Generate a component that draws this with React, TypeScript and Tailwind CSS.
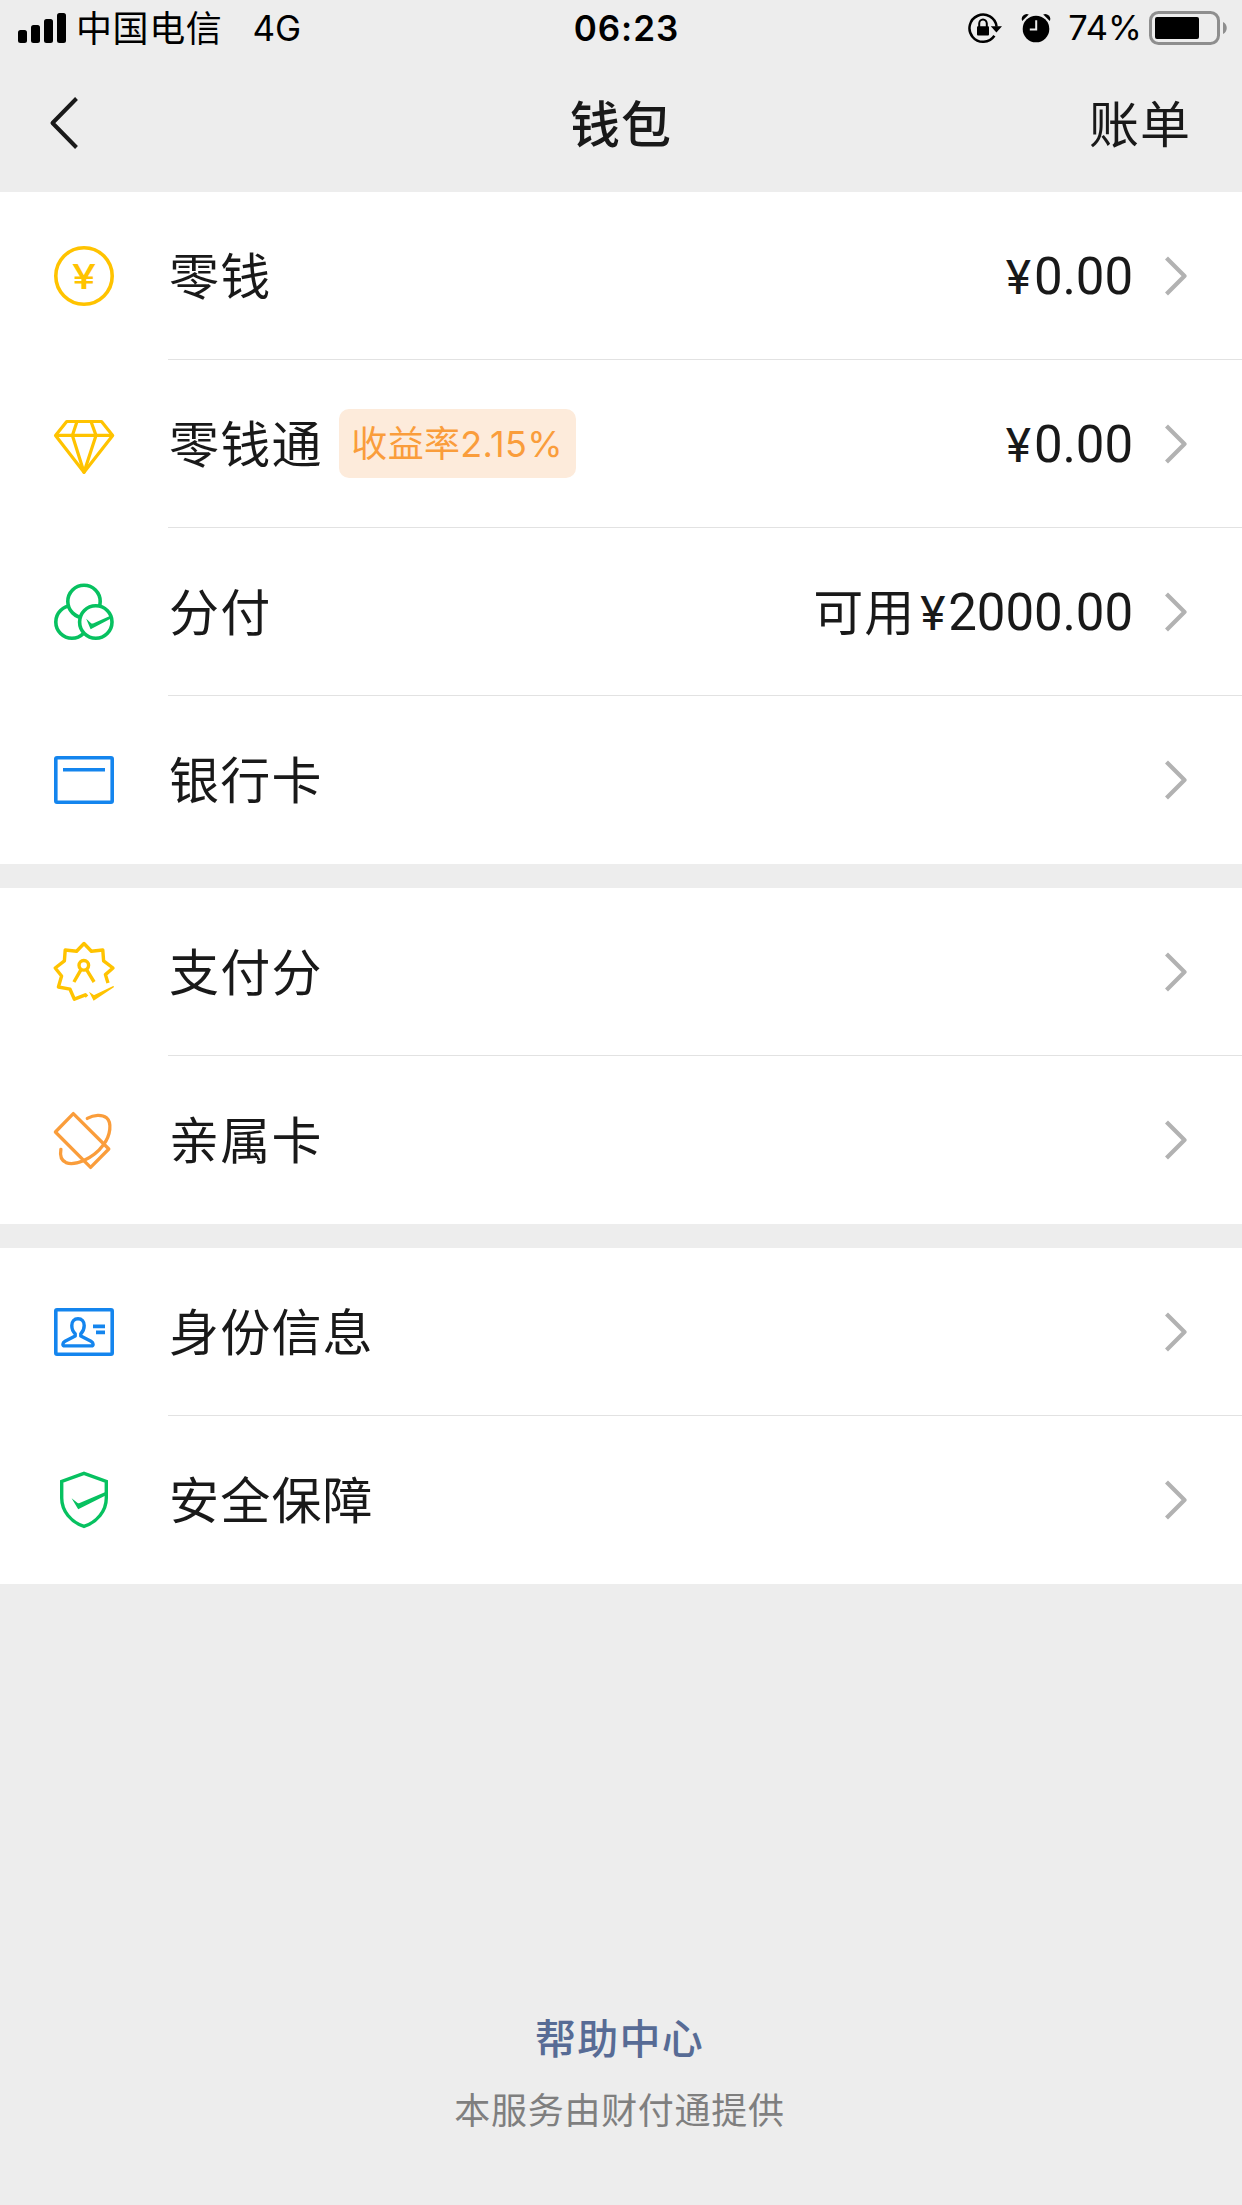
import React from 'react';
import type { ReactNode } from 'react';

interface WalletItem {
  label: string;
  icon: ReactNode;
  badge?: string;
  prefix?: string;
  amount?: string;
}

const YELLOW = '#ffc300';
const GREEN = '#07c160';
const BLUE = '#1485ee';
const ORANGE = '#fa9d3b';

function Icon({ color, children }: { color: string; children: ReactNode }) {
  return (
    <svg
      className="size-[72px] shrink-0"
      viewBox="0 0 72 72"
      fill="none"
      stroke={color}
      strokeWidth="3.6"
      strokeLinejoin="round"
    >
      {children}
    </svg>
  );
}

const coinIcon = (
  <Icon color={YELLOW}>
    <circle cx="36" cy="36" r="28.2" />
    <text
      x="36"
      y="49.2"
      textAnchor="middle"
      textLength="24"
      lengthAdjust="spacingAndGlyphs"
      fill={YELLOW}
      stroke="none"
      className="font-['Inter',sans-serif] text-[34.5px] font-medium"
    >
      ¥
    </text>
  </Icon>
);

const diamondIcon = (
  <Icon color={YELLOW}>
    <g strokeWidth="3.2">
      <path d="M18.7 13.5H53.5L64.7 27.4L36 64.3L7.5 27.4Z" />
      <path d="M7.5 27.4H64.7" />
      <path d="M29 13.5L24.4 27.4L36 64.3L48 27.4L43 13.5" />
    </g>
  </Icon>
);

const circlesIcon = (
  <Icon color={GREEN}>
    <circle cx="24" cy="46" r="16.2" />
    <circle cx="36" cy="25.4" r="16.2" fill="#fff" />
    <circle cx="47.8" cy="46" r="16.2" fill="#fff" />
    <path d="M38.2 42.8L43.4 47.4Q44 47.8 45 47.4L63 39.4V42.4L42.6 53.3Z" fill={GREEN} stroke="none" />
  </Icon>
);

const bankCardIcon = (
  <Icon color={BLUE}>
    <rect x="7.8" y="13.8" width="56.4" height="44.4" rx="1.2" />
    <path d="M15 25.8H57" />
  </Icon>
);

const scoreIcon = (
  <Icon color={YELLOW}>
    <g strokeWidth="3.4">
      <path d="M60 46.9L57.4 38.6L65 32L55.6 24.8L54.8 14L43.4 15.2L36 7.5L28.6 15.2L17.2 14L16.4 24.8L7.2 32L13.6 40L10.4 51L22 53.2L26.4 63.2L37.4 58.8L39 60.6" />
      <circle cx="35.8" cy="29.3" r="4.8" />
      <path d="M32.6 34.4L25.9 46M39 34.4L46.1 46" />
    </g>
    <path d="M41 55.7L45.4 58.8Q46 59.2 46.8 58.8L65.2 49.9Q66.4 50 65.8 51.2L45.6 64.7Z" fill={YELLOW} stroke="none" />
  </Icon>
);

const familyCardIcon = (
  <Icon color={ORANGE}>
    <g strokeWidth="3.3" strokeLinecap="round">
      <path d="M25.3 9.6L7.4 28L42.6 63.4L60.8 45Z" />
      <path d="M39.3 14.4C46 10.5 54 10.2 58.5 13.8C64 18.6 62.8 31 55.3 41C50 48.2 42 53.8 35.3 56.7C29 59.4 22 60.2 18 58.6C13 56.4 12 50.5 12.9 45.3" />
    </g>
  </Icon>
);

const idIcon = (
  <Icon color={BLUE}>
    <rect x="7.8" y="13.8" width="56.4" height="44.4" rx="1.2" />
    <path
      strokeWidth="3.4"
      d="M30 22.8C26.2 22.8 23.8 25.6 23.8 29.6C23.8 33.2 25.2 36 27.2 37.8V40L17 45.2C15.6 46 14.9 46.8 14.9 48.2C14.9 49.4 15.6 49.9 16.8 49.9H43.2C44.4 49.9 45.1 49.4 45.1 48.2C45.1 46.8 44.4 46 43 45.2L32.8 40V37.8C34.8 36 36.2 33.2 36.2 29.6C36.2 25.6 33.8 22.8 30 22.8Z"
    />
    <path d="M45 30.4H57M48 36.4H57" />
  </Icon>
);

const shieldIcon = (
  <Icon color={GREEN}>
    <path
      strokeWidth="3.4"
      d="M36 9.4L58.3 17.4V34C58.3 47 49 58.2 36 62.4C23 58.2 13.7 47 13.7 34V17.4Z"
      strokeLinejoin="miter"
    />
    <path d="M23.6 34.2L29.6 39Q30.4 39.6 31.6 39.1L58.6 27.6V30.9L30.2 45.2Z" fill={GREEN} stroke="none" />
  </Icon>
);

const groups: WalletItem[][] = [
  [
    { label: '零钱', icon: coinIcon, amount: '0.00' },
    { label: '零钱通', icon: diamondIcon, badge: '收益率2.15%', amount: '0.00' },
    { label: '分付', icon: circlesIcon, prefix: '可用', amount: '2000.00' },
    { label: '银行卡', icon: bankCardIcon },
  ],
  [
    { label: '支付分', icon: scoreIcon },
    { label: '亲属卡', icon: familyCardIcon },
  ],
  [
    { label: '身份信息', icon: idIcon },
    { label: '安全保障', icon: shieldIcon },
  ],
];

function StatusBar() {
  return (
    <div className="grid h-14 grid-cols-3 items-center text-black">
      <div className="flex h-14 items-center pl-[18px]">
        <svg className="h-[30px] w-12 shrink-0" viewBox="0 0 48 30">
          <rect x="0" y="17" width="9" height="13" rx="2.5" />
          <rect x="13" y="12" width="9" height="18" rx="2.5" />
          <rect x="26" y="6" width="9" height="24" rx="2.5" />
          <rect x="39" y="0" width="9" height="30" rx="2.5" />
        </svg>
        <span className="ml-[10px] pb-1 text-[36px] leading-none tracking-[0.6px]">中国电信</span>
        <span className="ml-[30px] font-['Inter',sans-serif] text-[35px] leading-none">4G</span>
      </div>
      <div className="pl-[11px] text-center font-['Inter',sans-serif] text-[35px] leading-none font-semibold tracking-[1px]">
        06:23
      </div>
      <div className="flex h-14 items-center justify-end pr-[14px]">
        {/* 方向锁定 */}
        <svg className="h-8 w-9 shrink-0" viewBox="0 0 36 32">
          <path
            d="M27.4 23.8A13.6 13.6 0 1 1 29.6 14.6"
            fill="none"
            stroke="#000"
            strokeWidth="2.5"
          />
          <path d="M23.8 14.2H35L29.4 20.4Z" />
          <rect x="10" y="14.2" width="12" height="9.2" rx="1" />
          <path d="M12.2 15V11.6A3.8 4.2 0 0 1 19.8 11.6V15" fill="none" stroke="#000" strokeWidth="2" />
        </svg>
        {/* 闹钟 */}
        <svg className="ml-[18px] h-8 w-[30px] shrink-0" viewBox="0 0 30 32">
          <circle cx="15" cy="17" r="13.3" />
          <path d="M1.2 9A5 5 0 0 1 7.8 2.4Z" />
          <path d="M28.8 9A5 5 0 0 0 22.2 2.4Z" />
          <path d="M15.2 8.2V17.4H8.8" fill="none" stroke="#ededed" strokeWidth="2" />
        </svg>
        <span className="ml-[17px] font-['Inter',sans-serif] text-[34.5px] leading-none">74%</span>
        <svg className="ml-[7px] h-[34px] w-[79px] shrink-0" viewBox="0 0 79 34">
          <rect x="1.5" y="1.5" width="68" height="31" rx="8" fill="none" stroke="#8e8e8e" strokeWidth="3" />
          <rect x="6" y="6" width="44" height="22" rx="2" />
          <path d="M74 11C79 13 79 21 74 23Z" fill="#8e8e8e" />
        </svg>
      </div>
    </div>
  );
}

function NavBar() {
  return (
    <div className="grid h-[136px] grid-cols-3 items-center pb-[2px] text-[50px] leading-none tracking-[1px]">
      <svg className="ml-12 h-14 w-8" viewBox="0 0 32 56" fill="none" stroke="#191919" strokeWidth="4">
        <path d="M28.5 3.5L4.5 28L28.5 52.5" strokeLinejoin="round" />
      </svg>
      <h1 className="pb-[5px] text-center font-medium">钱包</h1>
      <span className="pr-[51px] pb-[5px] text-right">账单</span>
    </div>
  );
}

function WalletRow({ item, last }: { item: WalletItem; last: boolean }) {
  return (
    <div className="flex h-[168px] pl-12">
      <div className="flex items-center">{item.icon}</div>
      <div
        className={`ml-[48px] flex flex-1 items-center border-b pr-[55px] ${
          last ? 'border-transparent' : 'border-[#e2e2e2]'
        }`}
      >
        <span className="ml-px pb-[5px] text-[50px] leading-none tracking-[1.2px]">{item.label}</span>
        {item.badge && (
          <span className="ml-4 flex h-[69px] w-[237px] items-center justify-center rounded-[10px] bg-[#fdebdb] font-['Inter','Noto_Sans_CJK_SC',sans-serif] text-[36px] leading-none tracking-[0.3px] text-[#fa9d3b]">
            {item.badge}
          </span>
        )}
        <span className="ml-auto flex items-center">
          {item.prefix && (
            <span className="pb-[5px] text-[50px] leading-none tracking-[1px]">{item.prefix}</span>
          )}
          {item.amount && (
            <span className="flex items-baseline pt-[2px] font-['Roboto',sans-serif] text-[51px] leading-none tracking-[-0.1px]">
              <span className="mr-[3px] ml-[5px] text-[48px] leading-none">¥</span>
              {item.amount}
            </span>
          )}
        </span>
        <svg
          className="ml-[31px] h-10 w-[23px] shrink-0"
          viewBox="0 0 23 40"
          fill="none"
          stroke="#b2b2b2"
          strokeWidth="4.2"
        >
          <path d="M2.5 2L20.5 20L2.5 38" strokeLinejoin="round" />
        </svg>
      </div>
    </div>
  );
}

export default function App() {
  return (
    <div className="flex h-[2205px] w-[1242px] flex-col overflow-hidden bg-[#ededed] font-['Noto_Sans_CJK_SC',sans-serif] text-[#191919]">
      <StatusBar />
      <NavBar />

      {/* 钱包列表 */}
      <div className="flex flex-col gap-6">
        {groups.map((items, index) => (
          <div key={index} className="bg-white">
            {items.map((item, i) => (
              <WalletRow key={item.label} item={item} last={i === items.length - 1} />
            ))}
          </div>
        ))}
      </div>

      {/* 底部 */}
      <div className="mt-auto flex flex-col items-center pr-[3px] pb-[79px]">
        <a className="text-[41px] leading-none font-medium tracking-[1.2px] text-[#576b95]">帮助中心</a>
        <p className="mt-[33px] text-[36px] leading-none tracking-[0.7px] text-[#7f7f7f]">本服务由财付通提供</p>
      </div>
    </div>
  );
}
